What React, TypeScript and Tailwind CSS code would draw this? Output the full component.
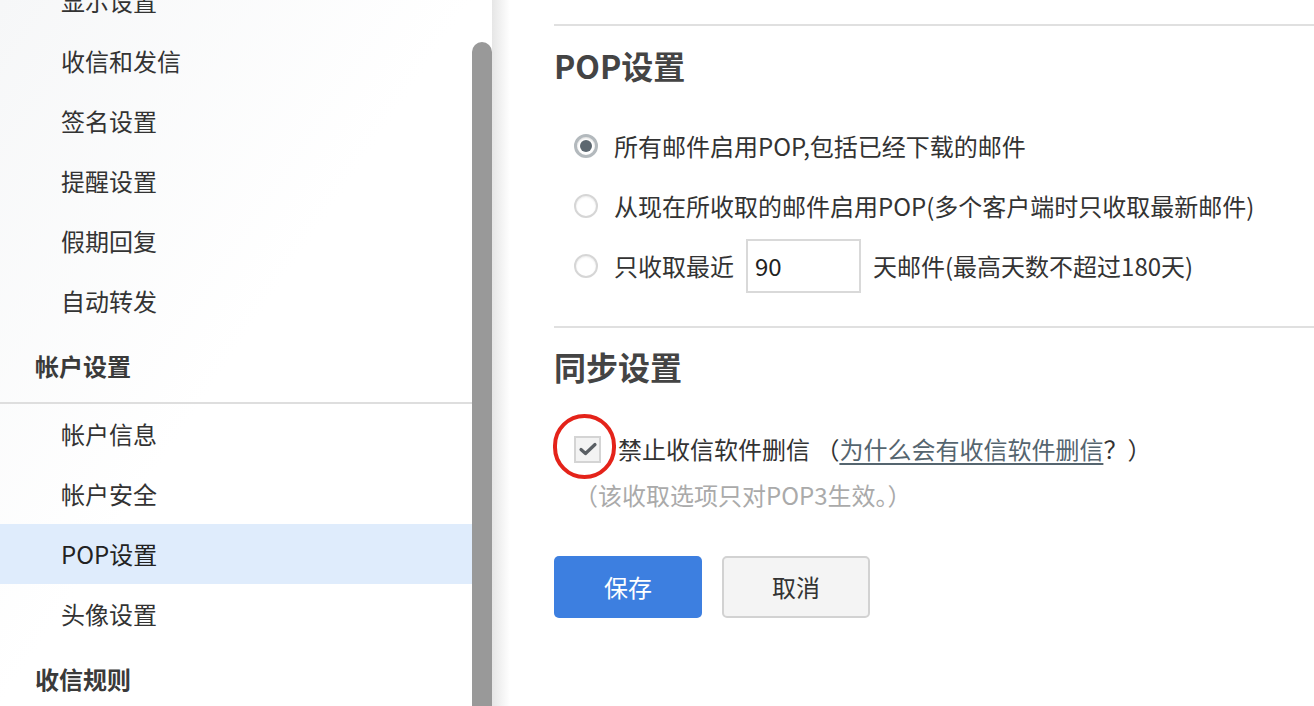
import React from 'react';

const font = { fontFamily: '"Noto Sans CJK SC", "Noto Sans", sans-serif' };

type NavItem = { label: string; header?: boolean; active?: boolean; divider?: boolean };

const navItems: NavItem[] = [
  { label: '显示设置' },
  { label: '收信和发信' },
  { label: '签名设置' },
  { label: '提醒设置' },
  { label: '假期回复' },
  { label: '自动转发' },
  { label: '帐户设置', header: true, divider: true },
  { label: '帐户信息' },
  { label: '帐户安全' },
  { label: 'POP设置', active: true },
  { label: '头像设置' },
  { label: '收信规则', header: true },
];

function Radio({ checked }: { checked?: boolean }) {
  return checked ? (
    <span className="flex h-[24px] w-[24px] shrink-0 items-center justify-center rounded-full border-[3px] border-[#b3b9bd] bg-white shadow-[inset_0_1px_2px_rgba(0,0,0,0.15)]">
      <span className="h-[12px] w-[12px] rounded-full bg-[#5c6770]" />
    </span>
  ) : (
    <span className="h-[24px] w-[24px] shrink-0 rounded-full border-2 border-[#d6d6d6] bg-white shadow-[inset_0_1px_2px_rgba(0,0,0,0.08)]" />
  );
}

export default function App() {
  return (
    <div style={font} className="flex h-[706px] w-full overflow-hidden bg-white text-[#333]">
      {/* Sidebar */}
      <aside className="w-[472px] shrink-0 bg-linear-to-br from-[#f6f7f8] via-white to-white">
        <div className="-mt-[29px] flex flex-col">
          {navItems.map((item) => (
            <React.Fragment key={item.label}>
              {item.header ? (
                <div className="flex h-[71px] items-center pb-[2px] pl-[35px] text-[24px] font-bold text-[#3a3a3a]">
                  {item.label}
                </div>
              ) : (
                <div
                  className={`flex h-[60px] items-center pl-[61px] text-[24px] ${
                    item.active ? 'bg-[#dfecfc] text-[#222]' : 'text-[#333]'
                  }`}
                >
                  {item.label}
                </div>
              )}
              {item.divider && <div className="h-[2px] bg-[#dedede]" />}
            </React.Fragment>
          ))}
        </div>
      </aside>

      {/* Scrollbar */}
      <div className="flex w-[20px] shrink-0 flex-col bg-white pt-[42px]">
        <div className="flex-1 rounded-t-full bg-[#999]" />
      </div>

      {/* Shadow */}
      <div className="w-[18px] shrink-0 bg-linear-to-r from-[#e6e6e6] to-white" />

      {/* Content */}
      <main className="flex flex-1 flex-col pl-[44px] pt-[24px]">
        <div className="h-[2px] bg-[#e0e0e0]" />
        <h2 className="mt-[23px] text-[32px] font-bold leading-[32px] text-[#444]">POP设置</h2>

        <div className="mt-[35px] flex flex-col pl-[20px] text-[24px]">
          <label className="flex h-[60px] items-center gap-[16px]">
            <Radio checked />
            <span>所有邮件启用POP,包括已经下载的邮件</span>
          </label>
          <label className="flex h-[60px] items-center gap-[16px]">
            <Radio />
            <span>从现在所收取的邮件启用POP(多个客户端时只收取最新邮件)</span>
          </label>
          <label className="flex h-[60px] items-center gap-[16px]">
            <Radio />
            <span>只收取最近</span>
            <span className="-ml-[4px] flex h-[54px] w-[115px] items-center border-2 border-[#d9d9d9] pl-[7px] text-[24px] text-[#222]">
              90
            </span>
            <span className="-ml-[4px]">天邮件(最高天数不超过180天)</span>
          </label>
        </div>

        <div className="mt-[30px] h-[2px] bg-[#e0e0e0]" />
        <h2 className="mt-[22px] text-[32px] font-bold leading-[32px] text-[#444]">同步设置</h2>

        <div className="mt-[47px] flex h-[40px] items-center pl-[20px] text-[24px]">
          <span className="relative flex h-[27px] w-[27px] shrink-0 items-center justify-center border-2 border-[#d4d4d4] bg-[#f3f3f3]">
            <svg width="20" height="16" viewBox="0 0 20 16" fill="none">
              <path d="M3 8.5 L7.5 12.5 L17 3.5" stroke="#5a5f64" strokeWidth="3.2" strokeLinecap="round" strokeLinejoin="round" />
            </svg>
            <span className="absolute left-[-23px] top-[-24px] h-[65px] w-[63px] rounded-full border-4 border-[#e4231a]" />
          </span>
          <span className="ml-[17px] whitespace-pre">禁止收信软件删信 （</span>
          <a className="text-[#55656f] underline decoration-[#55656f] underline-offset-4">为什么会有收信软件删信</a>
          <span>？）</span>
        </div>

        <p className="mt-[11px] pl-[20px] text-[24px] leading-[30px] text-[#aaa]">（该收取选项只对POP3生效。）</p>

        <div className="mt-[46px] flex gap-[20px]">
          <button className="h-[62px] w-[148px] rounded-[5px] bg-[#3d7fe0] text-[24px] text-white">保存</button>
          <button className="h-[62px] w-[148px] rounded-[5px] border-2 border-[#d2d2d2] bg-[#f4f4f4] text-[24px] text-[#333]">
            取消
          </button>
        </div>
      </main>
    </div>
  );
}
